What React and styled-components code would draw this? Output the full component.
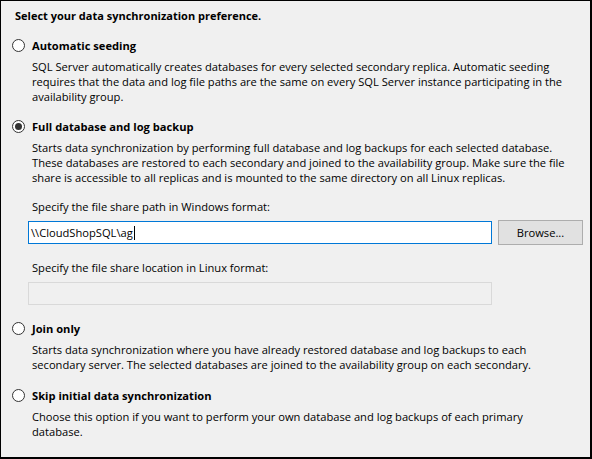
import React from "react";
import styled, { createGlobalStyle } from "styled-components";

const Global = createGlobalStyle`
  html, body { margin: 0; padding: 0; background: #f0f0f0; }
  body { font-family: "Open Sans", "Noto Sans", sans-serif; }
  * { box-sizing: border-box; }
`;

const Panel = styled.div`
  width: 592px;
  height: 459px;
  background: #f0f0f0;
  border-style: solid;
  border-color: #000;
  border-width: 1px 2px 2px 1px;
  padding: 7px 0 0 11px;
  display: flex;
  flex-direction: column;
  font-family: "Open Sans", "Noto Sans", sans-serif;
  font-size: 11.15px;
  line-height: 15px;
  color: #000;
`;

const Heading = styled.div`
  font-weight: 700;
  margin-left: 3px;
  font-size: 11px;
`;

const Option = styled.div`
  display: flex;
  flex-direction: column;
  margin-top: ${(p) => p.$top}px;
`;

const RadioRow = styled.label`
  display: flex;
  align-items: center;
  gap: 7px;
  font-weight: 700;
  height: 15px;
`;

const Circle = styled.span`
  width: 13px;
  height: 13px;
  border-radius: 50%;
  border: 1px solid #333;
  background: #fff;
  display: flex;
  align-items: center;
  justify-content: center;
  flex: none;
  &::after {
    content: "";
    width: 7px;
    height: 7px;
    border-radius: 50%;
    background: #333;
    display: ${(p) => (p.$checked ? "block" : "none")};
  }
`;

const Desc = styled.div`
  margin: 6px 0 0 20px;
  white-space: nowrap;
`;

const Line = styled.div``;

const FieldLabel = styled.div`
  margin: ${(p) => p.$top}px 0 0 20px;
`;

const FieldRow = styled.div`
  display: flex;
  gap: 6px;
  margin: ${(p) => p.$top}px 0 0 16px;
  align-items: center;
`;

const TextBox = styled.div`
  width: 464px;
  height: 23px;
  border: 1px solid ${(p) => (p.$disabled ? "#d9d9d9" : "#0078d7")};
  background: ${(p) => (p.$disabled ? "#f0f0f0" : "#fff")};
  display: flex;
  align-items: center;
  padding-left: 2px;
`;

const Caret = styled.span`
  display: inline-block;
  width: 1px;
  height: 14px;
  background: #000;
  margin-left: 1px;
`;

const Button = styled.button`
  width: 85px;
  height: 25px;
  background: #e1e1e1;
  border: 1px solid #adadad;
  font: inherit;
  color: #000;
  padding: 0;
`;

const options = [
  {
    title: "Automatic seeding",
    top: 15,
    lines: [
      "SQL Server automatically creates databases for every selected secondary replica. Automatic seeding",
      "requires that the data and log file paths are the same on every SQL Server instance participating in the",
      "availability group.",
    ],
  },
  {
    title: "Full database and log backup",
    top: 15,
    checked: true,
    lines: [
      "Starts data synchronization by performing full database and log backups for each selected database.",
      "These databases are restored to each secondary and joined to the availability group. Make sure the file",
      "share is accessible to all replicas and is mounted to the same directory on all Linux replicas.",
    ],
    fields: true,
  },
  {
    title: "Join only",
    top: 16,
    lines: [
      "Starts data synchronization where you have already restored database and log backups to each",
      "secondary server. The selected databases are joined to the availability group on each secondary.",
    ],
  },
  {
    title: "Skip initial data synchronization",
    top: 16,
    lines: [
      "Choose this option if you want to perform your own database and log backups of each primary",
      "database.",
    ],
  },
];

export default function App() {
  return (
    <>
      <Global />
      <Panel>
        <Heading>Select your data synchronization preference.</Heading>
        {options.map((o) => (
          <Option key={o.title} $top={o.top}>
            <RadioRow>
              <Circle $checked={o.checked} />
              {o.title}
            </RadioRow>
            <Desc>
              {o.lines.map((l) => (
                <Line key={l}>{l}</Line>
              ))}
            </Desc>
            {o.fields && (
              <>
                <FieldLabel $top={14}>Specify the file share path in Windows format:</FieldLabel>
                <FieldRow $top={6}>
                  <TextBox>
                    {"\\\\CloudShopSQL\\ag"}
                    <Caret />
                  </TextBox>
                  <Button>Browse...</Button>
                </FieldRow>
                <FieldLabel $top={15}>Specify the file share location in Linux format:</FieldLabel>
                <FieldRow $top={7}>
                  <TextBox $disabled />
                </FieldRow>
              </>
            )}
          </Option>
        ))}
      </Panel>
    </>
  );
}
